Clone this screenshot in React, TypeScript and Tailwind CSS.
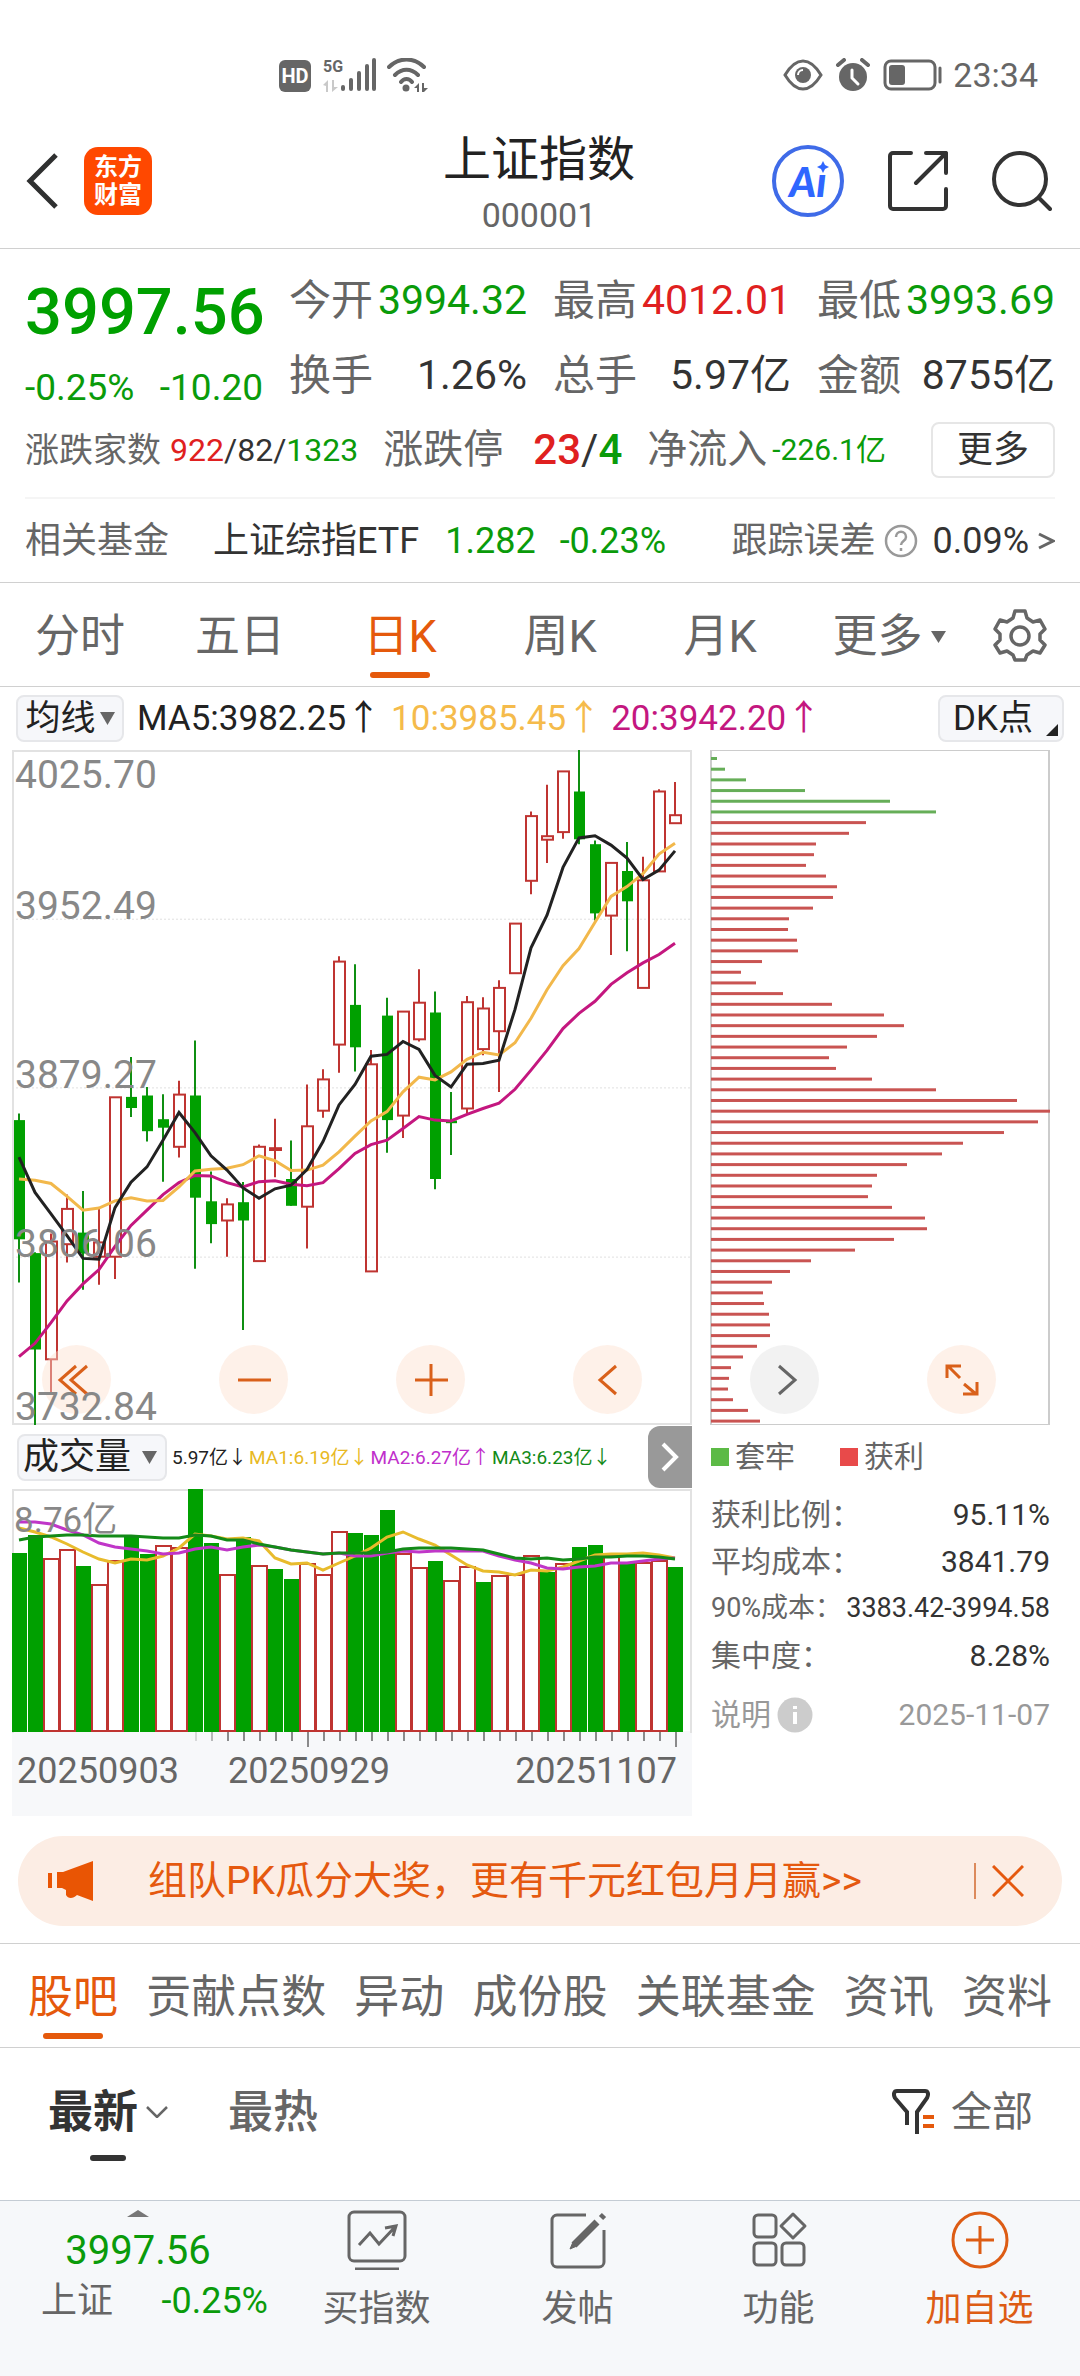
import React from "react";

type Candle = [up: 0 | 1, high: number, low: number, top: number, bottom: number];

const CHART_W = 680;
const CHART_H = 675;
const STEP = 16;
const centre = (i: number) => 7 + STEP * i;
const priceY = (v: number) => Math.round((v - 22) * 4.464) / 10;
const volumeY = (v: number) => Math.round((v - 207) / 3);

const candles: Candle[] = [
  [0, 836, 1215, 851, 1118], [0, 1147, 1536, 1149, 1365], [1, 1105, 1465, 1123, 1387], [1, 1018, 1170, 1050, 1129],
  [0, 1010, 1231, 1103, 1150], [1, 1050, 1220, 1125, 1157], [1, 800, 1207, 800, 1157], [0, 710, 844, 799, 824],
  [0, 777, 899, 796, 876], [0, 793, 989, 849, 868], [1, 763, 935, 794, 911], [0, 673, 1184, 796, 1025],
  [0, 966, 1127, 1033, 1084], [1, 1026, 1157, 1040, 1076], [0, 990, 1321, 1035, 1076], [1, 906, 1167, 911, 1167],
  [1, 848, 979, 914, 918], [0, 897, 1043, 983, 1043], [1, 771, 1139, 865, 1045], [1, 737, 846, 760, 830],
  [1, 484, 745, 496, 682], [0, 502, 742, 593, 688], [1, 694, 1190, 726, 1190], [0, 577, 924, 617, 851],
  [1, 608, 891, 608, 841], [1, 513, 675, 588, 670], [0, 563, 1006, 610, 983], [0, 788, 929, 852, 858],
  [1, 573, 836, 587, 825], [1, 576, 706, 601, 692], [1, 538, 788, 555, 652], [1, 411, 522, 411, 522],
  [1, 160, 345, 170, 315], [1, 100, 275, 215, 223], [1, 70, 221, 70, 206], [0, 22, 233, 115, 222],
  [0, 225, 404, 233, 388], [1, 273, 481, 275, 393], [0, 228, 473, 293, 361], [1, 261, 555, 314, 555],
  [1, 110, 294, 115, 294], [1, 94, 187, 168, 186],
];

const ma5 = [934, 1013, 1061, 1110, 1161, 1163, 1047, 990, 956, 896, 834, 879, 931, 963, 1003, 1026, 1005, 997, 962, 899, 817, 771, 708, 704, 675, 693, 751, 777, 726, 724, 717, 603, 465, 392, 285, 219, 214, 235, 264, 312, 291, 248];
const ma10 = [983, 986, 993, 1022, 1053, 1048, 1032, 1025, 1032, 1031, 1001, 965, 961, 959, 951, 931, 942, 964, 963, 952, 922, 887, 853, 832, 788, 755, 761, 743, 715, 699, 705, 678, 623, 559, 505, 467, 408, 350, 328, 299, 255, 231];
const ma20 = [1381, 1351, 1305, 1256, 1218, 1186, 1134, 1087, 1053, 1018, 991, 975, 976, 991, 1001, 989, 987, 995, 998, 991, 960, 926, 906, 896, 870, 843, 851, 853, 838, 825, 813, 782, 739, 695, 646, 612, 585, 547, 521, 499, 480, 455];

const volumes = [399, 345, 414, 387, 437, 491, 421, 352, 402, 374, 382, 207, 369, 463, 352, 434, 446, 478, 429, 461, 332, 339, 346, 270, 399, 440, 423, 479, 437, 486, 466, 462, 405, 455, 428, 381, 374, 401, 425, 426, 420, 440];
const volumeUp = "001101100110010100111000110110111010010110";
const vol5 = [323, 337, 352, 371, 396, 417, 430, 418, 420, 407, 385, 341, 347, 358, 353, 364, 413, 433, 429, 449, 428, 409, 385, 350, 337, 358, 375, 405, 435, 452, 457, 464, 451, 454, 440, 424, 406, 403, 401, 400, 405, 415];
const vol10 = [307, 306, 313, 330, 345, 370, 382, 386, 394, 401, 400, 387, 382, 389, 381, 375, 381, 390, 395, 403, 399, 408, 409, 398, 394, 396, 394, 392, 392, 394, 408, 421, 428, 445, 448, 442, 437, 430, 428, 424, 418, 415];
const vol20 = [361, 352, 348, 345, 345, 348, 348, 348, 352, 353, 353, 344, 347, 359, 359, 373, 380, 390, 395, 403, 399, 399, 400, 395, 387, 385, 383, 384, 388, 391, 402, 413, 416, 415, 419, 416, 412, 411, 409, 408, 411, 416];

const chips = [
  6, 14, 35, 94, 179, 225, 155, 138, 105, 103, 95, 115, 126, 122, 102, 78, 77, 86, 87, 51, 30, 45, 72, 121, 173, 193, 166, 136, 118, 125, 161, 225,
  306, 339, 327, 293, 252, 231, 196, 166, 161, 157, 181, 214, 216, 183, 144, 100, 79, 61, 52, 53, 58, 59, 59, 46, 32, 20, 18, 17, 22, 37, 49,
];

const line = (values: number[], y: (v: number) => number) => values.map((v, i) => `${centre(i)},${y(v)}`).join(" ");

function StatusBar() {
  return (
    <div className="flex h-[110px] items-end justify-between pr-[42px] pb-[18px] pl-[279px] text-[#666]">
      <div className="flex items-end">
        <span className="mr-3 flex h-8 w-8 items-center justify-center rounded-md bg-[#666] text-[20px] leading-none font-bold text-white">HD</span>
        <span className="flex h-[34px] w-[18px] flex-col justify-between">
          <span className="text-[16px] leading-[18px] font-bold">5G</span>
          <svg className="h-3 w-4" viewBox="0 0 16 12" fill="currentColor" opacity=".35"><path d="M0 5 5 0v12H3V6zM9 0h2v7h4l-6 5z" /></svg>
        </span>
        <svg className="mr-[10px] h-[34px] w-[36px]" viewBox="0 0 36 34" fill="currentColor" aria-label="5G signal">
          <rect x="0" y="27" width="4" height="6" rx="2" /><rect x="8" y="20" width="4" height="13" rx="2" />
          <rect x="16" y="13" width="4" height="20" rx="2" /><rect x="24" y="6" width="4" height="27" rx="2" />
          <rect x="31" y="0" width="4" height="33" rx="2" />
        </svg>
        <svg className="h-[34px] w-[42px]" viewBox="0 0 42 34" fill="none" stroke="currentColor" strokeWidth="4" strokeLinecap="round" aria-label="Wi-Fi">
          <path d="M2 9C12-1 27-1 37 9M8 17c7-7 16-7 23 0M14 24c3-4 8-4 11 0" />
          <circle cx="19" cy="30" r="3.500" fill="currentColor" stroke="none" />
          <path d="M27 30l5-5v9h-2v-4zM35 25h2v5h4l-5 5h-1z" fill="currentColor" stroke="none" />
        </svg>
      </div>
      <div className="flex items-center">
        <svg className="mr-3 h-8 w-10" viewBox="0 0 40 32" fill="none" stroke="currentColor" strokeWidth="3" aria-label="Eye comfort">
          <path d="M2 16C8 6 14 2 20 2s12 4 18 14c-6 10-12 14-18 14S8 26 2 16z" />
          <circle cx="20" cy="16" r="8" fill="currentColor" stroke="none" />
          <path d="M15 16a5 5 0 0 1 5-5" stroke="#fff" strokeWidth="2" />
        </svg>
        <svg className="mr-3 h-[34px] w-[36px]" viewBox="0 0 36 34" aria-label="Alarm">
          <circle cx="18" cy="19" r="14" fill="currentColor" />
          <path d="M3 7 9 2M33 7l-6-5" fill="none" stroke="currentColor" strokeWidth="4" strokeLinecap="round" />
          <path d="M17 12v8l6 6" fill="none" stroke="#fff" strokeWidth="3" strokeLinecap="round" />
        </svg>
        <svg className="mr-[10px] h-8 w-[60px]" viewBox="0 0 60 32" fill="none" stroke="currentColor" strokeWidth="3" aria-label="Battery">
          <rect x="2" y="2" width="50" height="28" rx="6" />
          <rect x="6" y="6" width="16" height="20" rx="3" fill="currentColor" stroke="none" />
          <path d="M57 9v14" strokeLinecap="round" />
        </svg>
        <span className="text-[34px] leading-none">23:34</span>
      </div>
    </div>
  );
}

function Header() {
  return (
    <header className="grid h-[139px] grid-cols-[1fr_auto_1fr] items-center border-b border-[#d0d0d0] pt-1 pr-[28px] pl-[26px]">
      <div className="flex items-center gap-[26px]">
        <button aria-label="返回">
          <svg className="h-[56px] w-8" viewBox="0 0 32 56" fill="none" stroke="#2f3030" strokeWidth="5"><path d="M30 2 4 28l26 26" /></svg>
        </button>
        <div className="flex h-[68px] w-[68px] flex-col items-center justify-center rounded-[14px] bg-[#ff4800] text-[24px] leading-[28px] font-bold text-white">
          <span>东方</span><span>财富</span>
        </div>
      </div>
      <div className="pt-1 text-center">
        <h1 className="text-[48px] leading-[60px] text-[#222]">上证指数</h1>
        <p className="mt-1 text-[34px] leading-[42px] text-[#666]">000001</p>
      </div>
      <div className="flex items-center justify-end gap-[44px] text-[#333]">
        <button className="relative flex h-[72px] w-[72px] items-center justify-center rounded-full border-4 border-[#3f6be8] font-['Lato'] text-[41px] leading-none font-black text-[#2f66ff] italic">
          Ai
          <svg className="absolute top-[12px] right-[11px] h-3 w-3 bg-white" viewBox="0 0 12 12" fill="#2f66ff">
            <path d="m6 0 2 4 4 2-4 2-2 4-2-4-4-2 4-2z" />
          </svg>
        </button>
        <button aria-label="分享">
          <svg className="h-[60px] w-[60px]" viewBox="0 0 60 60" fill="none" stroke="currentColor" strokeWidth="4" strokeLinecap="round" strokeLinejoin="round">
            <path d="M23 2H5a3 3 0 0 0-3 3v50a3 3 0 0 0 3 3h50a3 3 0 0 0 3-3V38M38 2h20v20M58 2 28 32" />
          </svg>
        </button>
        <button aria-label="搜索">
          <svg className="h-[60px] w-[60px]" viewBox="0 0 60 60" fill="none" stroke="currentColor" strokeWidth="4" strokeLinecap="round">
            <circle cx="28" cy="28" r="26" /><path d="m47 47 11 11" />
          </svg>
        </button>
      </div>
    </header>
  );
}

const quotes = [
  ["今开", "3994.32", "text-[#0a9b0a]"],
  ["最高", "4012.01", "text-[#e02020]"],
  ["最低", "3993.69", "text-[#0a9b0a]"],
  ["换手", "1.26%", "text-[#333]"],
  ["总手", "5.97亿", "text-[#333]"],
  ["金额", "8755亿", "text-[#333]"],
];

function Quote() {
  return (
    <section className="border-b border-[#d0d0d0] px-[25px] pt-[14px] leading-none whitespace-nowrap text-[#666]">
      <div className="flex gap-[26px]">
        <div className="w-[238px] text-[#0a9b0a]">
          <div className="flex h-[98px] items-center text-[65px] font-medium text-[#00a000]">3997.56</div>
          <div className="flex h-[52px] items-center justify-between text-[37px]"><span>-0.25%</span><span>-10.20</span></div>
        </div>
        <dl className="grid flex-1 grid-cols-3 gap-x-[26px] text-[42px]">
          {quotes.map(([name, value, tone]) => (
            <div key={name} className="flex h-[75px] items-center justify-between">
              <dt>{name}</dt><dd className={`text-[41px] ${tone}`}>{value}</dd>
            </div>
          ))}
        </dl>
      </div>
      <div className="flex h-[74px] items-center justify-between">
        <div className="flex items-center gap-[9px] text-[34px]">
          涨跌家数
          <span className="text-[32px] text-[#333]"><span className="text-[#e02020]">922</span>/82/<span className="text-[#0a9b0a]">1323</span></span>
        </div>
        <div className="flex items-center gap-[30px] text-[40px]">
          涨跌停
          <span className="text-[42px] text-[#333]"><span className="font-medium text-[#e02020]">23</span>/<span className="font-medium text-[#0a9b0a]">4</span></span>
        </div>
        <div className="flex items-center gap-[5px] text-[40px]">净流入<span className="text-[30px] text-[#0a9b0a]">-226.1亿</span></div>
        <button className="ml-[20px] h-[56px] w-[124px] rounded-lg border-2 border-[#e6e6e6] text-[36px] text-[#333]">更多</button>
      </div>
      <a href="#fund" className="mt-[10px] flex h-[85px] items-center border-t-2 border-[#f5f5f5] text-[36px]">
        <span>相关基金</span>
        <span className="ml-[44px] text-[#333]">上证综指ETF</span>
        <span className="ml-[26px] text-[#0a9b0a]">1.282</span>
        <span className="ml-[24px] text-[#0a9b0a]">-0.23%</span>
        <span className="ml-auto">跟踪误差</span>
        <svg className="ml-[9px] h-[34px] w-[34px]" viewBox="0 0 34 34" fill="none" stroke="#999" strokeWidth="2.500">
          <circle cx="17" cy="17" r="15" /><path d="M12 13c0-7 10-7 10 0 0 4-5 4-5 8M17 24v3" />
        </svg>
        <span className="ml-[14px] text-[#333]">0.09%</span>
        <svg className="ml-2 h-[18px] w-[18px]" viewBox="0 0 18 18" fill="none" stroke="#666" strokeWidth="3"><path d="m2 2 14 7-14 7" /></svg>
      </a>
    </section>
  );
}

function PeriodTabs() {
  return (
    <nav className="flex h-[104px] items-center border-b border-[#d0d0d0] text-[45px] leading-none text-[#666]">
      {["分时", "五日", "日K", "周K", "月K", "更多"].map((tab) => (
        <button key={tab} className={tab === "日K" ? "relative h-full flex-[4] pt-1 text-[#e5590c]" : "h-full flex-[4] pt-1"}>
          <span className={tab === "更多" ? "inline-flex items-center gap-2 pl-[18px]" : "inline-flex"}>
            {tab}
            {tab === "更多" && <svg className="h-[12px] w-[15px]" viewBox="0 0 15 12" fill="#666"><path d="M0 0h15L7.500 12z" /></svg>}
          </span>
          {tab === "日K" && <span className="absolute bottom-2 left-1/2 h-[6px] w-[60px] -translate-x-1/2 rounded-full bg-[#e5590c]" />}
        </button>
      ))}
      <button aria-label="设置" className="flex flex-[3] justify-center">
        <svg className="h-[54px] w-[54px]" viewBox="0 0 54 54" fill="none" stroke="#666" strokeWidth="3.500" strokeLinejoin="round">
          <path d="M22 3h10l2 7 6 4 7-2 5 9-5 5v6l5 5-5 8-7-2-6 4-2 5H22l-2-5-6-4-7 2-5-8 5-5v-6l-5-5 5-9 7 2 6-4z" />
          <circle cx="27" cy="28" r="9" />
        </svg>
      </button>
    </nav>
  );
}

function AverageBar() {
  return (
    <div className="flex h-[63px] items-center justify-between pr-4 pl-4 text-[35px] leading-none whitespace-nowrap text-[#222]">
      <div className="flex items-center">
        <button className="mr-[13px] flex h-[47px] w-[108px] items-center justify-center gap-1 rounded-lg border-2 border-[#e6e7ea] bg-[#f6f7fa]">
          均线<svg className="h-[13px] w-[15px]" viewBox="0 0 15 13" fill="#666"><path d="M0 0h15L7.500 13z" /></svg>
        </button>
        <span>MA5:3982.25↑</span>
        <span className="ml-[10px] text-[#f5bb4b]">10:3985.45↑</span>
        <span className="ml-[10px] text-[#c4177f]">20:3942.20↑</span>
      </div>
      <button className="flex h-[47px] w-[126px] items-center justify-between rounded-lg border-2 border-[#e6e7ea] bg-[#f6f7fa] pr-1 pl-[13px]">
        DK点<svg className="mb-1 h-3 w-3 self-end" viewBox="0 0 12 12" fill="#222"><path d="M12 0v12H0z" /></svg>
      </button>
    </div>
  );
}

function CandleChart() {
  return (
    <div className="relative border-2 border-[#e2e2e2]">
      <svg className="-m-[2px] block h-[675px] w-[calc(100%+4px)]" viewBox={`0 0 ${CHART_W} ${CHART_H}`} preserveAspectRatio="none" fill="none">
        {[401, 779, 1158].map((v) => (
          <path key={v} d={`M0 ${priceY(v)}H${CHART_W}`} stroke="#e0e0e0" strokeDasharray="2 2" />
        ))}
        {candles.map(([up, high, low, top, bottom], i) => {
          const x = centre(i);
          const [h, l, t, b] = [high, low, top, bottom].map(priceY);
          return up ? (
            <g key={i} stroke="#bf3431" strokeWidth="2">
              <path d={`M${x} ${h}V${t}M${x} ${b}V${l}`} />
              <rect x={x - 5} y={t} width="11" height={Math.max(b - t, 1)} />
            </g>
          ) : (
            <g key={i}>
              <path d={`M${x} ${h}V${l}`} stroke="#0f8f12" strokeWidth="2" />
              <rect x={x - 5} y={t} width="11" height={b - t} fill="#00a000" />
            </g>
          );
        })}
        <polyline points={line(ma20, priceY)} stroke="#c4177f" strokeWidth="3" />
        <polyline points={line(ma10, priceY)} stroke="#f2b84b" strokeWidth="3" />
        <polyline points={line(ma5, priceY)} stroke="#222" strokeWidth="3" />
      </svg>
      <div className="pointer-events-none absolute inset-0 z-10 flex flex-col pl-[1px] text-[39px] leading-none text-[#888]">
        <span className="mt-1">4025.70</span>
        <span className="mt-[92px]">3952.49</span>
        <span className="mt-[130px]">3879.27</span>
        <span className="mt-[130px]">3806.06</span>
        <span className="mt-auto -mb-1">3732.84</span>
      </div>
    </div>
  );
}

function ChipChart() {
  return (
    <div className="border-x-2 border-y border-[#ccc]">
      <svg className="block h-[673px] w-full overflow-visible" viewBox="0 0 336 673" preserveAspectRatio="none">
        {chips.map((w, i) => (
          <rect key={i} x="-1" y={6 + 10.687 * i} width={w} height="3" fill={i < 6 ? "#66ae58" : "#c95452"} />
        ))}
      </svg>
    </div>
  );
}

const tools = [
  { name: "最早", d: "M25 12 9 26l16 14M36 12 20 26l16 14" },
  { name: "缩小", d: "M10 26h33" },
  { name: "放大", d: "M10 26h33M26 10v32" },
  { name: "向左", d: "M34 12 18 26l16 14" },
  { name: "向右", d: "M20 12l16 14-16 14" },
  { name: "全屏", d: "M11 24V12h14M12 12l12 12M41 28v12H27M40 40 28 30" },
];

function ChartTools() {
  return (
    <div className="absolute right-[84px] bottom-[11px] left-[42px] flex justify-between">
      {tools.map(({ name, d }) => (
        <button
          key={name}
          aria-label={name}
          className={
            name === "向右"
              ? "flex h-[69px] w-[69px] items-center justify-center rounded-full bg-[#e6e6e6]/50 text-[#666]"
              : "flex h-[69px] w-[69px] items-center justify-center rounded-full bg-[#fddfcf]/45 text-[#d9601a]"
          }
        >
          <svg className="h-[52px] w-[52px]" viewBox="0 0 52 52" fill="none" stroke="currentColor" strokeWidth="3"><path d={d} /></svg>
        </button>
      ))}
    </div>
  );
}

function VolumePanel() {
  return (
    <div>
      <div className="flex h-16 items-center leading-none whitespace-nowrap">
        <button className="ml-[5px] flex h-[47px] w-[150px] items-center justify-between rounded-lg border-2 border-[#e6e7ea] bg-[#f6f7fa] pr-2 pl-[4px] text-[36px] text-[#222]">
          成交量<svg className="h-[13px] w-[15px]" viewBox="0 0 15 13" fill="#666"><path d="M0 0h15L7.500 13z" /></svg>
        </button>
        <div className="ml-[5px] flex gap-[2px] text-[19px]">
          <span className="text-[#222]">5.97亿↓</span>
          <span className="text-[#e8b923]">MA1:6.19亿↓</span>
          <span className="text-[#c02fcb]">MA2:6.27亿↑</span>
          <span className="text-[#138a18]">MA3:6.23亿↓</span>
        </div>
        <button aria-label="更多指标" className="ml-auto flex h-[62px] w-11 items-center justify-center rounded-l-xl bg-[#999]">
          <svg className="h-[30px] w-[18px]" viewBox="0 0 18 30" fill="none" stroke="#fff" strokeWidth="4"><path d="m2 2 13 13L2 28" /></svg>
        </button>
      </div>
      <div className="relative border-2 border-b-0 border-[#e2e2e2]">
        <svg className="-m-[2px] block h-[244px] w-[calc(100%+4px)]" viewBox="0 0 680 244" preserveAspectRatio="none" fill="none">
          {volumes.map((v, i) => {
            const y = volumeY(v);
            return volumeUp[i] === "1" ? (
              <rect key={i} x={STEP * i} y={y + 1} width="15" height={241 - y} stroke="#bf3431" strokeWidth="2" />
            ) : (
              <rect key={i} x={STEP * i} y={y} width="15" height={243 - y} fill="#00a000" />
            );
          })}
          <polyline points={line(vol5, volumeY)} stroke="#e8bb2c" strokeWidth="3" />
          <polyline points={line(vol10, volumeY)} stroke="#c036c8" strokeWidth="3" />
          <polyline points={line(vol20, volumeY)} stroke="#138a18" strokeWidth="3" />
        </svg>
        <span className="absolute top-3 left-0 text-[35px] leading-none text-[#888]">8.76亿</span>
      </div>
      <div className="h-[85px] bg-[#f7f8fa] text-[36px] leading-none text-[#666]">
        <svg className="block h-5 w-full" viewBox="0 0 680 20" preserveAspectRatio="none">
          {Array.from({ length: 31 }, (_, k) => k + 11).map((i) => (
            <rect key={i} x={centre(i)} y="1" width="2" height={i === 18 || i === 41 ? 15 : 9} fill="#777" opacity={i < 13 ? (i - 10) / 4 : 0.85} />
          ))}
        </svg>
        <div className="grid grid-cols-[1fr_auto_1fr] pt-[2px] pr-[15px] pl-[5px]">
          <span>20250903</span><span className="mr-[76px]">20250929</span><span className="text-right">20251107</span>
        </div>
      </div>
    </div>
  );
}

const stats = [
  ["获利比例：", "95.11%", "text-[30px]"],
  ["平均成本：", "3841.79", "text-[30px]"],
  ["90%成本：", "3383.42-3994.58", "text-[27px]"],
  ["集中度：", "8.28%", "text-[30px]"],
];

function ChipStats() {
  return (
    <div className="pl-[1px] text-[30px] leading-none whitespace-nowrap text-[#666]">
      <div className="flex h-[63px] items-center gap-[45px]">
        <span className="flex items-center gap-[6px]"><i className="h-[18px] w-[18px] bg-[#5cba46]" />套牢</span>
        <span className="flex items-center gap-[6px]"><i className="h-[18px] w-[18px] bg-[#e84a4a]" />获利</span>
      </div>
      <dl className="pt-[3px]">
        {stats.map(([name, value, size]) => (
          <div key={name} className={`flex h-[47px] items-center justify-between ${size}`}>
            <dt>{name}</dt><dd className="text-[#333]">{value}</dd>
          </div>
        ))}
      </dl>
      <div className="flex h-[72px] items-center justify-between text-[#999]">
        <button className="flex items-center gap-[6px] text-[30px]">
          说明
          <svg className="h-9 w-9" viewBox="0 0 36 36"><circle cx="18" cy="18" r="17.500" fill="#ccc" /><path d="M18 9v3M18 15v12" stroke="#fff" strokeWidth="4" /></svg>
        </button>
        <span>2025-11-07</span>
      </div>
    </div>
  );
}

function Banner() {
  return (
    <div className="mx-[18px] mt-5 flex h-[90px] items-center rounded-full bg-[#fcede4] pr-[38px] pl-[30px] text-[#e5590f]">
      <svg className="h-10 w-[46px] shrink-0" viewBox="0 0 46 40" fill="#e95504">
        <path d="M0 12h4v15H0zM9 11h6L45 0v40l-16-6c-4 4-9 4-11 0v-5l-4-2H9z" />
      </svg>
      <a href="#pk" className="ml-[54px] flex-1 text-[39px] leading-none whitespace-nowrap">组队PK瓜分大奖，更有千元红包月月赢&gt;&gt;</a>
      <button aria-label="关闭" className="flex h-9 items-center border-l-2 border-[#dc8a5c] pl-4">
        <svg className="h-8 w-8" viewBox="0 0 32 32" fill="none" stroke="currentColor" strokeWidth="3"><path d="m1 1 30 30M31 1 1 31" /></svg>
      </button>
    </div>
  );
}

function TopicTabs() {
  return (
    <nav className="mt-[17px] flex h-[105px] justify-between border-y border-[#d0d0d0] px-[28px] text-[45px] leading-none whitespace-nowrap text-[#666]">
      {["股吧", "贡献点数", "异动", "成份股", "关联基金", "资讯", "资料"].map((tab, i) => (
        <button key={tab} className={i === 0 ? "relative pt-1 text-[#e5590c]" : "pt-1"}>
          {tab}
          {i === 0 && <span className="absolute bottom-2 left-1/2 h-[6px] w-[60px] -translate-x-1/2 rounded-full bg-[#e5590c]" />}
        </button>
      ))}
    </nav>
  );
}

function SortBar() {
  return (
    <div className="flex h-[152px] items-center pr-[47px] pb-[24px] pl-[48px] text-[45px] leading-none text-[#666]">
      <button className="relative flex items-center gap-2 font-bold text-[#333]">
        最新
        <svg className="h-3 w-[22px]" viewBox="0 0 22 12" fill="none" stroke="#666" strokeWidth="2.500"><path d="m1 1 10 10L21 1" /></svg>
        <span className="absolute top-[65px] left-[42px] h-[6px] w-9 rounded-full bg-[#333]" />
      </button>
      <button className="ml-[60px] font-medium">最热</button>
      <button className="ml-auto flex items-center gap-4 text-[41px]">
        <svg className="h-[46px] w-[43px]" viewBox="0 0 43 46" fill="none" strokeWidth="4">
          <path d="M15 36V23L3 9C1 5 2 2 5 2h28c3 0 4 3 2 7L25 23v22" stroke="#333" />
          <path d="M31 28h11M31 37h11" stroke="#e5590c" />
        </svg>
        全部
      </button>
    </div>
  );
}

const actions: [string, React.ReactNode][] = [
  ["买指数", <><rect x="2" y="2" width="56" height="49" rx="5" /><path d="m12 35 11-12 9 11 16-17M38 18l11-2-3 10M8 59h44" /></>],
  ["发帖", <><path d="M38 5H9a5 5 0 0 0-5 5v42a5 5 0 0 0 5 5h42a5 5 0 0 0 5-5V20" /><path d="m26 35 23-23" strokeWidth="7" /><path d="m53 8 3-3" strokeWidth="6" /><path d="m22 39 3-7 4 4z" strokeWidth="1" fill="currentColor" /></>],
  ["功能", <><rect x="5" y="5" width="22" height="22" rx="4" /><rect x="5" y="33" width="22" height="22" rx="4" /><rect x="33" y="33" width="22" height="22" rx="4" /><path d="m44 4 12 12-12 12-12-12z" strokeLinejoin="round" /></>],
  ["加自选", <><circle cx="30" cy="30" r="27" /><path d="M16 30h28M30 16v28" /></>],
];

function BottomBar() {
  return (
    <footer className="flex flex-1 border-t border-[#c4ccd4] bg-[#f6f8fa] text-[36px] leading-none whitespace-nowrap text-[#666]">
      <button className="flex w-[276px] flex-col items-center pt-[9px]">
        <svg className="h-[7px] w-[22px]" viewBox="0 0 22 7" fill="#777"><path d="M11 0 22 7H0z" /></svg>
        <span className="mt-[14px] text-[40px] text-[#0a9b0a]">3997.56</span>
        <span className="mt-[12px] flex w-full justify-between pr-2 pl-[41px]"><span>上证</span><span className="text-[#0a9b0a]">-0.25%</span></span>
      </button>
      {actions.map(([name, icon]) => (
        <button key={name} className={name === "加自选" ? "flex flex-1 flex-col items-center gap-[21px] pt-[9px] text-[#dd5c14]" : "flex flex-1 flex-col items-center gap-[21px] pt-[9px]"}>
          <svg className="h-[60px] w-[60px]" viewBox="0 0 60 60" fill="none" stroke="currentColor" strokeWidth="3">{icon}</svg>
          {name}
        </button>
      ))}
    </footer>
  );
}

export default function App() {
  return (
    <div className="flex min-h-screen flex-col bg-white font-['Roboto','Noto_Sans_CJK_SC',sans-serif]">
      <StatusBar />
      <Header />
      <Quote />
      <PeriodTabs />
      <AverageBar />
      <main>
        <div className="relative">
          <div className="grid grid-cols-[2fr_1fr] gap-[18px] pr-[30px] pl-3"><CandleChart /><ChipChart /></div>
          <ChartTools />
        </div>
        <div className="grid grid-cols-[2fr_1fr] gap-[18px] pr-[30px] pl-3"><VolumePanel /><ChipStats /></div>
      </main>
      <Banner />
      <TopicTabs />
      <SortBar />
      <BottomBar />
    </div>
  );
}
